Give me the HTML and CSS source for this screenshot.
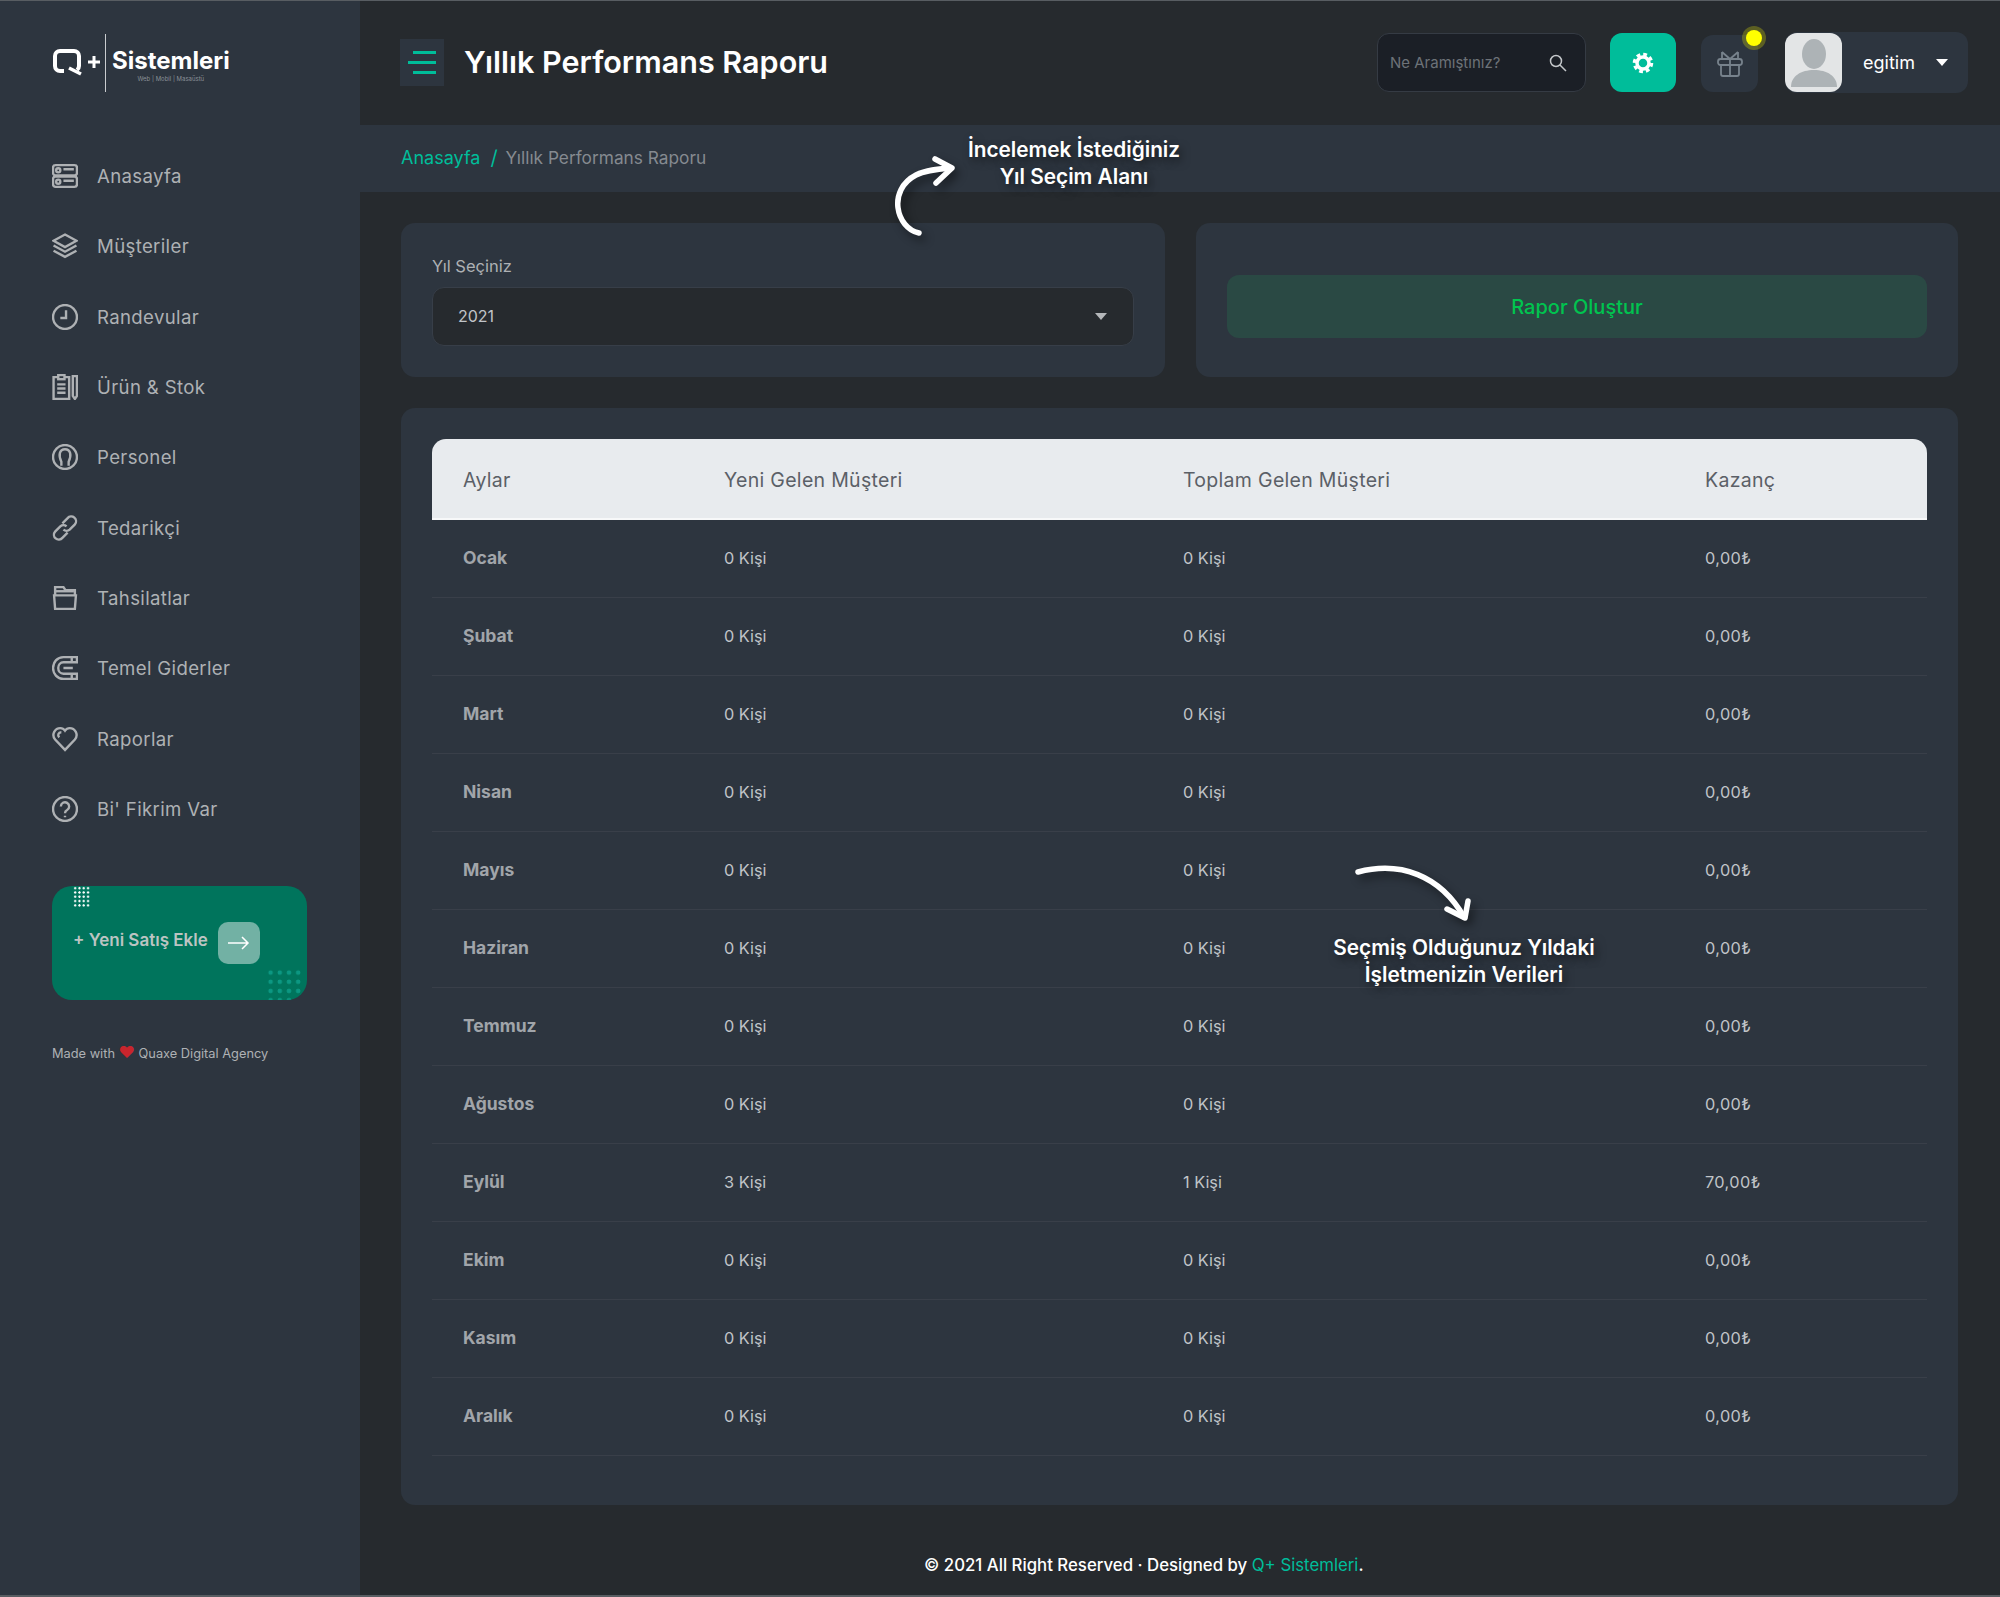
FILE: index.html
```html
<!DOCTYPE html>
<html lang="tr">
<head>
    <meta charset="UTF-8">
    <meta name="viewport" content="width=device-width, initial-scale=1.0">
    <title>Yıllık Performans Raporu</title>
    <link rel="stylesheet" href="styles.css">
</head>
<body>
    <div class="page">
        <aside class="sidebar">
            <div class="logo">
                <svg class="logo-mark" width="50" height="30" viewBox="0 0 50 30">
                    <path d="M12 23H8a5 5 0 0 1-5-5V8a5 5 0 0 1 5-5h14a5 5 0 0 1 5 5v10a5 5 0 0 1-2 4" fill="none" stroke="#fff" stroke-width="4"/>
                    <path d="M17 20l12 6" fill="none" stroke="#fff" stroke-width="3.5"/>
                    <path d="M36 14h12M42 8v12" fill="none" stroke="#fff" stroke-width="3"/>
                </svg>
                <span class="logo-line"></span>
                <div class="logo-text">
                    <strong>Sistemleri</strong>
                    <small>Web | Mobil | Masaüstü</small>
                </div>
            </div>
            <ul class="menu">
                <li>
                    <svg viewBox="0 0 25 25"><rect x="1" y="2" width="23" height="10" rx="2.5"/><rect x="1" y="13" width="23" height="10" rx="2.5"/><circle cx="6" cy="7" r="2"/><circle cx="6" cy="18" r="2"/><path d="M11 6h10M11 17h10"/></svg>
                    Anasayfa
                </li>
                <li>
                    <svg viewBox="0 0 25 25"><path d="M12.5 1.5l11 6-11 6-11-6z"/><path d="M1.5 12l11 6 11-6"/><path d="M1.5 17l11 6 11-6"/></svg>
                    Müşteriler
                </li>
                <li>
                    <svg viewBox="0 0 25 25"><circle cx="12.5" cy="12.5" r="11.5"/><path d="M13.500 6v7.500H8"/></svg>
                    Randevular
                </li>
                <li>
                    <svg viewBox="0 0 25 25"><path d="M6 3H1.500v21h15V3H12"/><rect x="6" y="1" width="6" height="4"/><path d="M5 10h8M5 14h8M5 18h8"/><path d="M20 2h4v19l-2 3-2-3z"/></svg>
                    Ürün &amp; Stok
                </li>
                <li>
                    <svg viewBox="0 0 25 25"><circle cx="12.500" cy="12.500" r="11.500"/><path d="M9 21v-4c-3-6-2-12 3.500-12S19 11 16 17v4"/></svg>
                    Personel
                </li>
                <li>
                    <svg viewBox="0 0 25 25"><path d="M10 8l5-5a4.500 4.500 0 0 1 7 6l-5 5a4.500 4.500 0 0 1-6 0"/><path d="M15 17l-5 5a4.500 4.500 0 0 1-7-6l5-5a4.500 4.500 0 0 1 6 0"/></svg>
                    Tedarikçi
                </li>
                <li>
                    <svg viewBox="0 0 25 25"><path d="M2 10h21l-1 13H3z"/><path d="M3 10V2h8l2 3h9v5"/><path d="M3 6h18"/></svg>
                    Tahsilatlar
                </li>
                <li>
                    <svg viewBox="0 0 25 25"><path d="M24 2H11C5 2 1 7 1 12.500S5 23 11 23h13v-5H11c-3 0-5-2.500-5-5.500S8 7 11 7h13z"/><path d="M19 2v5M19 18v5M11 12.500h9"/></svg>
                    Temel Giderler
                </li>
                <li>
                    <svg viewBox="0 0 25 25"><path d="M12.500 23L3 13C-1 8 3 2 8 2c2 0 3.500 1 4.500 2.500C13.500 3 15 2 17 2c5 0 9 6 5 11z"/><path d="M9 6C6 6 5 9 7 11"/></svg>
                    Raporlar
                </li>
                <li>
                    <svg viewBox="0 0 25 25"><circle cx="12.500" cy="12.500" r="11.500"/><path d="M8.500 10a4 4 0 1 1 6 3.500c-1.500.8-2 1.500-2 3M12.500 19v1.500"/></svg>
                    Bi' Fikrim Var
                </li>
            </ul>
            <div class="sale-card">
                <span class="dots-light"></span>
                <span class="dots-dark"></span>
                <span class="sale-text">+ Yeni Satış Ekle</span>
                <span class="sale-btn">
                    <svg width="22" height="14" viewBox="0 0 22 14"><path d="M0 7h20M14 1l6 6-6 6" fill="none" stroke="#fff" stroke-width="1.500"/></svg>
                </span>
            </div>
            <p class="made">Made with <span class="heart">&#9829;</span> Quaxe Digital Agency</p>
        </aside>

        <main class="main">
            <header class="topbar">
                <button class="burger" type="button"><i class="short"></i><i></i><i class="short"></i></button>
                <h1>Yıllık Performans Raporu</h1>
                <div class="search">
                    <span>Ne Aramıştınız?</span>
                    <svg width="18" height="18" viewBox="0 0 18 18"><circle cx="7" cy="7" r="5.500" fill="none" stroke="#c4c7ca" stroke-width="1.500"/><path d="M11 11l6 6" stroke="#c4c7ca" stroke-width="1.500"/></svg>
                </div>
                <button class="gear" type="button">
                    <svg width="24" height="24" viewBox="0 0 24 24"><circle cx="12" cy="12" r="8.500" fill="none" stroke="#fff" stroke-width="3.500" stroke-dasharray="3.700 2.970"/><circle cx="12" cy="12" r="6" fill="none" stroke="#fff" stroke-width="3.500"/></svg>
                </button>
                <div class="gift">
                    <svg width="26" height="26" viewBox="0 0 26 26" fill="none" stroke="#77828c" stroke-width="1.800" stroke-linejoin="round"><rect x="1" y="8" width="24" height="6" rx="2.500"/><path d="M4 14v9a2 2 0 0 0 2 2h14a2 2 0 0 0 2-2v-9M13 8v17M5 1l8 7 8-7M5 1v7M21 1v7"/></svg>
                    <span class="gift-dot"></span>
                </div>
                <div class="user">
                    <div class="avatar">
                        <svg width="57" height="59" viewBox="0 0 57 59"><ellipse cx="29" cy="21" rx="12" ry="15" fill="#adb3b6"/><path d="M6 54c0-11 10-17 23-17s23 6 23 17z" fill="#adb3b6"/></svg>
                    </div>
                    <span class="user-name">egitim</span>
                    <span class="caret caret-white"></span>
                </div>
            </header>

            <nav class="crumb">
                <a href="#">Anasayfa</a>
                <span class="crumb-sep">/</span>
                <span>Yıllık Performans Raporu</span>
            </nav>

            <div class="content">
                <div class="filters">
                    <div class="card year-card">
                        <label>Yıl Seçiniz</label>
                        <div class="select">
                            <span>2021</span>
                            <span class="caret"></span>
                        </div>
                    </div>
                    <div class="card report-card">
                        <button class="report-btn" type="button">Rapor Oluştur</button>
                    </div>
                </div>

                <div class="card table-card">
                    <table>
                        <colgroup>
                            <col class="col-month"><col class="col-new"><col class="col-total"><col>
                        </colgroup>
                        <thead>
                            <tr><th>Aylar</th><th>Yeni Gelen Müşteri</th><th>Toplam Gelen Müşteri</th><th>Kazanç</th></tr>
                        </thead>
                        <tbody>
                            <tr><td>Ocak</td><td>0 Kişi</td><td>0 Kişi</td><td>0,00₺</td></tr>
                            <tr><td>Şubat</td><td>0 Kişi</td><td>0 Kişi</td><td>0,00₺</td></tr>
                            <tr><td>Mart</td><td>0 Kişi</td><td>0 Kişi</td><td>0,00₺</td></tr>
                            <tr><td>Nisan</td><td>0 Kişi</td><td>0 Kişi</td><td>0,00₺</td></tr>
                            <tr><td>Mayıs</td><td>0 Kişi</td><td>0 Kişi</td><td>0,00₺</td></tr>
                            <tr><td>Haziran</td><td>0 Kişi</td><td>0 Kişi</td><td>0,00₺</td></tr>
                            <tr><td>Temmuz</td><td>0 Kişi</td><td>0 Kişi</td><td>0,00₺</td></tr>
                            <tr><td>Ağustos</td><td>0 Kişi</td><td>0 Kişi</td><td>0,00₺</td></tr>
                            <tr><td>Eylül</td><td>3 Kişi</td><td>1 Kişi</td><td>70,00₺</td></tr>
                            <tr><td>Ekim</td><td>0 Kişi</td><td>0 Kişi</td><td>0,00₺</td></tr>
                            <tr><td>Kasım</td><td>0 Kişi</td><td>0 Kişi</td><td>0,00₺</td></tr>
                            <tr><td>Aralık</td><td>0 Kişi</td><td>0 Kişi</td><td>0,00₺</td></tr>
                        </tbody>
                    </table>
                </div>
            </div>

            <footer class="footer">
                © 2021 All Right Reserved · Designed by <a href="#">Q+ Sistemleri</a>.
            </footer>
        </main>
    </div>

    <!-- egitim notlari -->
    <svg class="note-arrow arrow-year" width="75" height="90" viewBox="0 0 75 90" fill="none" stroke="#fff" stroke-width="5.500" stroke-linecap="round" stroke-linejoin="round">
        <path d="M31 83C8 78 -1 40 28 25C38 20 50 19 62 18"/>
        <path d="M47 9L64 18L48 33"/>
    </svg>
    <div class="note note-year">İncelemek İstediğiniz<br>Yıl Seçim Alanı</div>
    <svg class="note-arrow arrow-data" width="125" height="75" viewBox="0 0 125 75" fill="none" stroke="#fff" stroke-width="5.500" stroke-linecap="round" stroke-linejoin="round">
        <path d="M8 17C50 6 90 20 114 62"/>
        <path d="M97 54L115 63L118 46"/>
    </svg>
    <div class="note note-data">Seçmiş Olduğunuz Yıldaki<br>İşletmenizin Verileri</div>
</body>
</html>
```

FILE: styles.css
```css
* {
    box-sizing: border-box;
}

body {
    margin: 0;
    font-family: Inter, "Noto Sans", sans-serif;
    background-color: #262a2e;
    color: #c0c4c8;
}

button {
    border: none;
    padding: 0;
    font-family: inherit;
}

.page {
    display: flex;
    height: 1597px;
    border-top: 1px solid #585d62;
    border-bottom: 2px solid #585d62;
    overflow: hidden;
}

/* sidebar */
.sidebar {
    width: 360px;
    flex-shrink: 0;
    padding: 0 52px;
    background-color: #2d353f;
}

.logo {
    display: flex;
    align-items: center;
    height: 140px;
    padding-bottom: 16px;
}

.logo-mark {
    flex-shrink: 0;
}

.logo-line {
    width: 1px;
    height: 58px;
    margin: 0 6px 0 3px;
    background-color: #c9cccf;
}

.logo-text {
    display: flex;
    flex-direction: column;
    align-items: center;
    padding-top: 3px;
    color: #fff;
}

.logo-text strong {
    font-size: 24px;
    font-weight: 700;
    line-height: 28px;
}

.logo-text small {
    font-size: 6px;
    line-height: 8px;
    color: #8b9198;
}

.menu {
    list-style: none;
    margin: 0;
    padding: 0;
}

.menu li {
    display: flex;
    align-items: center;
    gap: 19px;
    height: 70.3px;
    font-size: 18.6px;
    letter-spacing: 0.35px;
    color: #aeb1b4;
}

.menu svg {
    width: 26px;
    height: 26px;
    flex-shrink: 0;
    fill: none;
    stroke: #aeb1b4;
    stroke-width: 2.300;
}

.sale-card {
    position: relative;
    display: flex;
    align-items: center;
    gap: 11px;
    width: 255px;
    height: 114px;
    margin-top: 42px;
    padding: 0 0 0 21px;
    border-radius: 20px;
    background-color: #00745c;
    overflow: hidden;
}

.dots-light {
    position: absolute;
    left: 21px;
    top: 0;
    width: 18px;
    height: 21px;
    background-image: radial-gradient(circle, #fff 1px, transparent 1.3px);
    background-size: 4.300px 4.300px;
}

.dots-dark {
    position: absolute;
    right: 4px;
    bottom: 0;
    width: 37px;
    height: 32px;
    background-image: radial-gradient(circle, #0c9782 2px, transparent 2.500px);
    background-size: 9.200px 9.200px;
}

.sale-text {
    font-size: 17px;
    font-weight: 600;
    color: #bcc4c2;
    margin-bottom: 5px;
}

.sale-btn {
    display: flex;
    align-items: center;
    justify-content: center;
    width: 42px;
    height: 42px;
    margin-left: -1px;
    border-radius: 10px;
    background-color: #72b1a4;
}

.made {
    margin: 44px 0 0;
    font-size: 12.800px;
    color: #aeb1b4;
    white-space: nowrap;
}

.heart {
    color: #c9252d;
    font-size: 16px;
    line-height: 1;
}

/* header */
.main {
    flex: 1;
    display: flex;
    flex-direction: column;
    min-width: 0;
}

.topbar {
    display: flex;
    align-items: center;
    height: 124px;
    padding: 0 32px 1px 40px;
}

.burger {
    display: flex;
    flex-direction: column;
    align-items: flex-end;
    justify-content: center;
    gap: 7px;
    width: 44px;
    height: 47px;
    padding-right: 8px;
    background-color: #2d353f;
}

.burger i {
    display: block;
    width: 28px;
    height: 3px;
    background-color: #00bd9a;
}

.burger i.short {
    width: 23px;
}

.topbar h1 {
    flex: 1;
    margin: 0 0 3px 20px;
    font-size: 30.500px;
    font-weight: 600;
    color: #fff;
}

.search {
    display: flex;
    align-items: center;
    justify-content: space-between;
    width: 209px;
    height: 59px;
    padding: 0 18px 0 12px;
    border: 1px solid #353b44;
    border-radius: 12px;
    background-color: #1b1f26;
    font-size: 15px;
    color: #6d7278;
}

.gear {
    display: flex;
    align-items: center;
    justify-content: center;
    width: 66px;
    height: 59px;
    margin-left: 24px;
    border-radius: 12px;
    background-color: #00bd9a;
}

.gift {
    position: relative;
    display: flex;
    align-items: center;
    justify-content: center;
    width: 57px;
    height: 57px;
    margin: 2px 0 0 25px;
    border-radius: 12px;
    background-color: #2d353f;
}

.gift-dot {
    position: absolute;
    top: -5px;
    right: -4px;
    width: 16px;
    height: 16px;
    border-radius: 50%;
    background-color: #ffff00;
    box-shadow: 0 0 0 4px rgba(255, 255, 0, 0.25);
}

.user {
    display: flex;
    align-items: center;
    width: 183px;
    height: 61px;
    margin-left: 27px;
    border-radius: 12px;
    background-color: #2d353f;
    font-size: 18px;
    color: #fff;
}

.avatar {
    width: 57px;
    height: 59px;
    border-radius: 12px;
    background-color: #e3e5e6;
    overflow: hidden;
}

.user-name {
    margin-left: 21px;
}

.caret {
    width: 0;
    height: 0;
    border-left: 6px solid transparent;
    border-right: 6px solid transparent;
    border-top: 7px solid #b4b7ba;
}

.caret-white {
    margin-left: 21px;
    border-top-color: #fff;
}

/* breadcrumb */
.crumb {
    display: flex;
    align-items: center;
    height: 67px;
    padding: 0 0 2px 41px;
    background-color: #2d353f;
    font-size: 17.300px;
    color: #858a90;
}

.crumb a {
    font-size: 18px;
    color: #00bd9a;
    text-decoration: none;
}

.crumb-sep {
    margin: 0 8px 0 10px;
    font-size: 20px;
    color: #00bd9a;
}

/* content */
.content {
    padding: 31px 42px 0 41px;
}

.filters {
    display: grid;
    grid-template-columns: 764px 762px;
    gap: 31px;
    margin-bottom: 31px;
}

.card {
    border-radius: 14px;
    background-color: #2d353f;
}

.year-card {
    height: 154px;
    padding: 31px;
}

.year-card label {
    display: block;
    height: 33px;
    font-size: 16.500px;
    line-height: 24px;
    color: #aeb1b4;
}

.select {
    display: flex;
    align-items: center;
    justify-content: space-between;
    height: 59px;
    padding: 0 26px 1px 25px;
    border: 1px solid #373e48;
    border-radius: 12px;
    background-color: #262a2e;
    font-size: 16px;
    color: #c0c4c8;
}

.report-card {
    display: flex;
    align-items: flex-start;
    height: 154px;
    padding: 52px 31px 0;
}

.report-btn {
    width: 100%;
    height: 63px;
    border-radius: 12px;
    background-color: #2a4944;
    font-size: 20px;
    font-weight: 500;
    color: #00c44f;
}

.table-card {
    padding: 31px 31px 49px;
}

table {
    width: 100%;
    border-collapse: collapse;
    table-layout: fixed;
}

.col-month {
    width: 261px;
}

.col-new {
    width: 459px;
}

.col-total {
    width: 522px;
}

th {
    height: 80px;
    padding: 2px 31px 0;
    background-color: #e8ebee;
    border-bottom: 2px solid #f7f8f9;
    font-size: 19.500px;
    font-weight: 400;
    letter-spacing: 0.3px;
    text-align: left;
    color: #5b6067;
}

th:first-child {
    border-top-left-radius: 14px;
}

th:last-child {
    border-top-right-radius: 14px;
}

td {
    height: 78px;
    padding: 0 31px;
    border-bottom: 1px solid #393f49;
    font-size: 16.300px;
    color: #c0c4c8;
}

td:last-child {
    letter-spacing: 0.4px;
}

td:first-child {
    padding-bottom: 2px;
    font-size: 17.500px;
    font-weight: 700;
    color: #a1a5aa;
}

.footer {
    padding: 50px 0 0 564px;
    font-size: 16.800px;
    font-weight: 500;
    color: #fff;
    white-space: nowrap;
}

.footer a {
    color: #00bd9a;
    text-decoration: none;
    font-weight: 400;
}

/* notes over the page */
.note {
    position: absolute;
    font-size: 20.800px;
    font-weight: 600;
    line-height: 27px;
    text-align: center;
    color: #fff;
    white-space: nowrap;
    text-shadow: 3px 4px 8px rgba(0, 0, 0, 0.5);
    transform: translateX(-50%);
}

.note-year {
    left: 1074px;
    top: 136px;
}

.note-data {
    left: 1464px;
    top: 934px;
}

.note-arrow {
    position: absolute;
    filter: drop-shadow(4px 5px 5px rgba(0, 0, 0, 0.45));
}

.arrow-year {
    left: 888px;
    top: 150px;
}

.arrow-data {
    left: 1350px;
    top: 855px;
}
```
